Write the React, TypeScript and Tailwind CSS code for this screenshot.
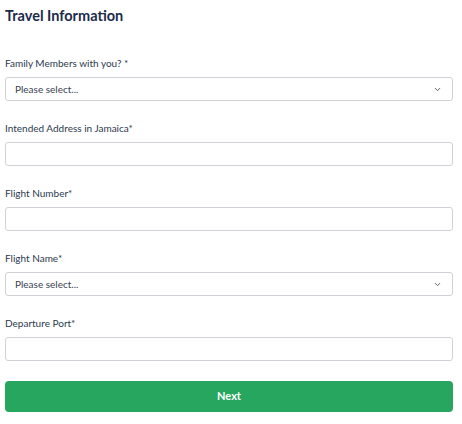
import { ChevronDown } from "lucide-react";

function SelectField({ label }: { label: string }) {
    return <div className="flex flex-col">
        <label className="text-[10px] text-[#2c3a4e] mb-[7px] leading-[13px]">{label}</label>
        <div className="h-6 border border-[#cfd3d8] rounded-[3px] flex items-center justify-between pl-[9px] pr-[10px]">
            <span className="text-[10px] text-[#3a4250]">Please select...</span>
            <ChevronDown className="w-[9px] h-[9px] text-[#4b5563]" strokeWidth={2.5} />
        </div>
    </div>
}

function TextField({ label }: { label: string }) {
    return <div className="flex flex-col">
        <label className="text-[10px] text-[#2c3a4e] mb-[7px] leading-[13px]">{label}</label>
        <input className="h-6 border border-[#cfd3d8] rounded-[3px] px-2 outline-none" />
    </div>
}

export default function App() {
    return <div className="w-[462px] h-[424px] bg-white px-[5px] pt-[7px]" style={{ fontFamily: "Lato, 'Liberation Sans', sans-serif" }}>
        <h2 className="text-[14.5px] font-bold text-[#1c2b4a] leading-[18px]">Travel Information</h2>
        <div className="w-[448px] flex flex-col gap-[21px] mt-[32px]">
            <SelectField label="Family Members with you? *" />
            <TextField label="Intended Address in Jamaica*" />
            <TextField label="Flight Number*" />
            <SelectField label="Flight Name*" />
            <TextField label="Departure Port*" />
        </div>
        <button className="block w-[448px] h-[31px] mt-[20px] bg-[#27a660] rounded-[4px] text-white text-[11px] font-bold">Next</button>
    </div>
}
